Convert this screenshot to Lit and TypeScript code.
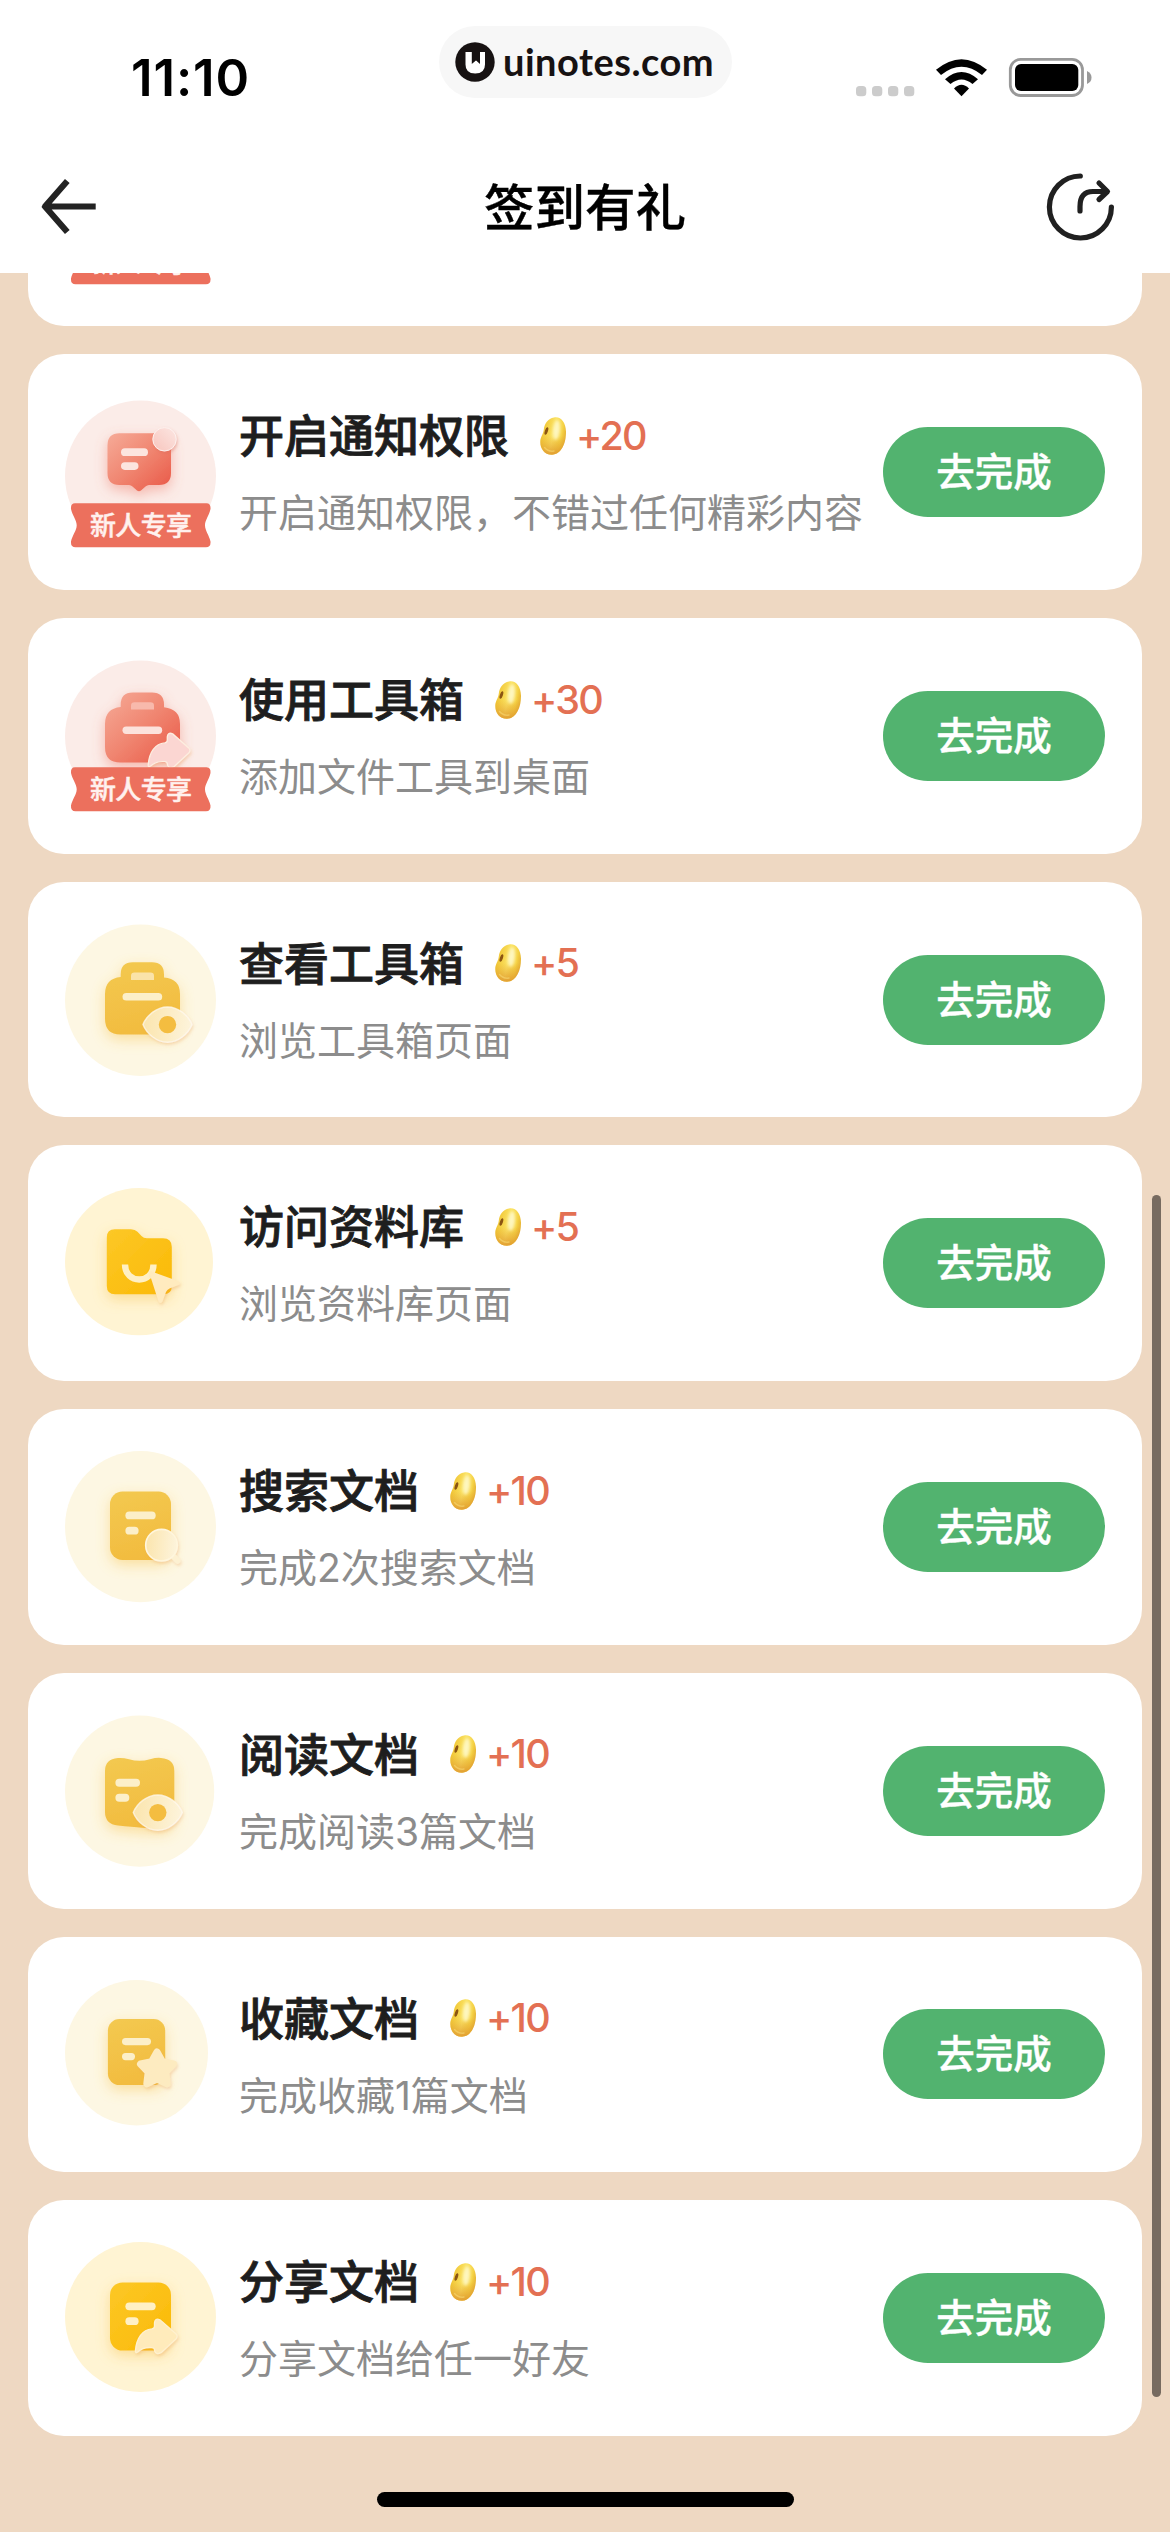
import { LitElement, html, svg, css } from "lit";
import type { SVGTemplateResult } from "lit";
import { customElement } from "lit/decorators.js";

interface Task {
  title: string;
  detail: string;
  reward: number;
  newcomer?: boolean;
  art: SVGTemplateResult;
}

/* Task artwork is drawn in card space: x from the screen edge, y from the card top. */

const bar = (x: number, y: number, w: number, h: number, fill: string) =>
  svg`<rect x=${x} y=${y} width=${w} height=${h} rx=${h / 2} fill=${fill} />`;

const disc = (cx: number, cy: number, rx: number, ry: number, fill: string) =>
  svg`<ellipse cx=${cx} cy=${cy} rx=${rx} ry=${ry} fill=${fill} />`;

const eye = (cx: number, cy: number) => svg`
  <g transform="translate(${cx} ${cy})">
    <path d="M-24.500 0C-21-9-11-17.600 0-17.600S21-9 24.500 0C21 9 11 17.600 0 17.600S-21 9-24.500 0Z"
      fill="url(#pale)" stroke="#fffaf0" stroke-opacity=".75" stroke-width="1.400" stroke-linejoin="round" filter="url(#soft)" />
    <circle r="8.700" fill="#f4bd40" />
  </g>`;

const arrow = (x: number, y: number, fill: string, edge: string) => svg`
  <g transform="translate(${x} ${y})">
    <path d="M.5 31.500C1.500 19 7.500 10.300 17 9.600Q19.600 9.300 19.600 7V3.500Q20-1.500 25 .6L41 14.600Q43.500 17.200 41 19.800L26.500 33.200Q21.500 36 19.800 32V31Q19.600 28.600 17 28.400Q8 27.600 2.800 32.800Q.4 34.500 .5 31.500Z"
      fill=${fill} stroke=${edge} stroke-width="1.300" filter="url(#soft)" />
  </g>`;

const ART = {
  notice: svg`
    <g clip-path="url(#above)">${disc(140.500, 122, 75.500, 75.500, "#fbece8")}</g>
    <path d="M119.500 79.300H159Q171 79.300 171 91.300V119Q171 131 159 131H149Q147 131 145.500 132.500L141 136.500Q139 138 137 136.500L132.500 132.500Q131 131 129 131H119.500Q107.500 131 107.500 119V91.300Q107.500 79.300 119.500 79.300Z"
      fill="url(#coral)" filter="url(#glowRed)" />
    ${bar(121, 94.300, 27, 7.800, "#fce5df")}
    ${bar(121, 108.300, 17.500, 7.600, "#fce5df")}
    <circle cx="164.500" cy="85.300" r="11.700" fill="url(#blush)" stroke="#fdf1ee" stroke-width="1" filter="url(#softRed)" />`,
  useBox: svg`
    <g clip-path="url(#above)">${disc(140.500, 118.200, 75.500, 75.600, "#fbece8")}</g>
    <path d="M120.700 89V86.600Q120.700 74.600 132.700 74.600H152Q164 74.600 164 86.600V89.300Q180 91 180 106V129Q180 144.600 164.500 144.600H120.500Q105 144.600 105 129V106Q105 90.500 120.700 89Z"
      fill="url(#coral)" filter="url(#glowRed)" />
    <path d="M131 91.600V87.500Q131 84.300 134.500 84.300H150.500Q154 84.300 154 87.500V91.600Z" fill="#f8b9ac" />
    ${bar(122.500, 108.600, 39.700, 7.400, "#fce2dc")}
    ${arrow(147.700, 115.300, "#fbd6d2", "#fdeee0")}`,
  viewBox: svg`
    ${disc(140.500, 118.200, 75.500, 75.700, "#fdf7e3")}
    <path d="M120.700 95V92.200Q120.700 80.200 132.700 80.200H152Q164 80.200 164 92.200V95.600Q180 97 180 112V136.500Q180 152.600 164.500 152.600H120.500Q105 152.600 105 136.500V112Q105 96.500 120.700 95Z"
      fill="url(#amber)" filter="url(#glow)" />
    <path d="M131 98V93.800Q131 90.600 134.500 90.600H150.500Q154 90.600 154 93.800V98Z" fill="#fae3a9" />
    ${bar(122.500, 110.900, 39.700, 7.700, "#fcefc9")}
    ${eye(167.500, 142.600)}`,
  library: svg`
    ${disc(139, 116.700, 74, 73.600, "#fff4d3")}
    <path d="M115 84.200H131Q135 84.200 137.500 86.800L141.500 91Q143.500 93.200 147 93.200H163Q171.800 93.200 171.800 102V141Q171.800 149.200 163.500 149.200H115Q106.800 149.200 106.800 141V92.400Q106.800 84.200 115 84.200Z"
      fill="url(#gold)" filter="url(#glow)" />
    <path d="M125 119.500C125 139.500 153.500 139.500 153.500 119.500" fill="none" stroke="#fff0c4" stroke-width="6.400" />
    <path d="M151.500 126.500L178.500 136.200Q182 138 178.500 140L169.500 143.500Q167 144.500 166 147L162.500 156.500Q160.500 159.500 158.500 156.500L149.500 128.500Q149 125.800 151.500 126.500Z"
      fill="#ffebbf" filter="url(#soft)" />`,
  search: svg`
    ${disc(140.500, 117.700, 75.500, 75.600, "#fdf7e3")}
    <rect x="110" y="82.500" width="61" height="68.500" rx="12.500" fill="url(#amber)" filter="url(#glow)" />
    ${bar(125.400, 102.500, 30.300, 7.800, "#fcefc9")}
    ${bar(125.400, 117.800, 13.200, 7.800, "#fcefc9")}
    <g filter="url(#soft)">
      <path d="M172 146L177.500 151.800" stroke="#fdf1d2" stroke-width="6" stroke-linecap="round" />
      <circle cx="161.500" cy="136.200" r="15.800" fill="url(#pale)" stroke="#fff6dd" stroke-width="1.600" />
    </g>`,
  read: svg`
    ${disc(139.600, 118.200, 74.600, 75.600, "#fdf7e3")}
    <path d="M118 85Q123 84.500 129 86.300Q139.500 89.300 150 86.300Q157 84.400 161 85Q174.300 86 174.300 98V141Q174.300 157 157 155.500Q148 155.600 118 152.600Q105 151 105 139V98Q105 86 118 85Z"
      fill="url(#amber)" filter="url(#glow)" />
    ${bar(115.400, 105.800, 24.600, 8, "#fcefc9")}
    ${bar(115.400, 120.800, 13.900, 8, "#fcefc9")}
    ${eye(157.800, 139.600)}`,
  collect: svg`
    ${disc(136.500, 115.700, 71.500, 72.700, "#fdf7e3")}
    <rect x="107.900" y="82.100" width="57.300" height="66" rx="11.500" fill="url(#amber)" filter="url(#glow)" />
    ${bar(122, 101, 29, 7.200, "#fcefc9")}
    ${bar(122, 116, 13, 7.200, "#fcefc9")}
    <path d="M157 115L162.500 124.800L173.500 127L165.800 135.200L167.200 146.800L157 142L146.800 146.800L148.200 135.200L140.500 127L151.500 124.800Z"
      fill="#fdebc0" stroke="#fdebc0" stroke-width="7" stroke-linejoin="round" filter="url(#soft)" />`,
  share: svg`
    ${disc(140.500, 117, 75.500, 75, "#fff4d3")}
    <rect x="110" y="82.400" width="61" height="68.200" rx="12.500" fill="url(#gold)" filter="url(#glow)" />
    ${bar(125.400, 102.400, 30.300, 7.800, "#fff0c4")}
    ${bar(125.400, 117.300, 13.200, 7.800, "#fff0c4")}
    ${arrow(134.900, 119.200, "#ffebbb", "#fff1cf")}`,
};

const TASKS: Task[] = [
  { title: "开启通知权限", detail: "开启通知权限，不错过任何精彩内容", reward: 20, newcomer: true, art: ART.notice },
  { title: "使用工具箱", detail: "添加文件工具到桌面", reward: 30, newcomer: true, art: ART.useBox },
  { title: "查看工具箱", detail: "浏览工具箱页面", reward: 5, art: ART.viewBox },
  { title: "访问资料库", detail: "浏览资料库页面", reward: 5, art: ART.library },
  { title: "搜索文档", detail: "完成2次搜索文档", reward: 10, art: ART.search },
  { title: "阅读文档", detail: "完成阅读3篇文档", reward: 10, art: ART.read },
  { title: "收藏文档", detail: "完成收藏1篇文档", reward: 10, art: ART.collect },
  { title: "分享文档", detail: "分享文档给任一好友", reward: 10, art: ART.share },
];

@customElement("app-root")
export class AppRoot extends LitElement {
  static styles = css`
    :host {
      display: block;
      width: 1170px;
      height: 2532px;
      overflow: hidden;
      font-family: "Inter", "Noto Sans CJK SC", sans-serif;
      color: #1e1e1e;
    }
    * { box-sizing: border-box; }
    svg { display: block; flex: none; }
    .screen {
      position: relative;
      display: flex;
      flex-direction: column;
      width: 1170px;
      height: 2532px;
      background: #eed8c2;
    }
    .top { height: 273px; flex: none; background: #fff; z-index: 1; }
    .status {
      display: grid;
      grid-template-columns: 439px 293px 438px;
      height: 140px;
      align-items: start;
    }
    .time {
      padding: 48px 0 0 131px;
      font-size: 51px;
      line-height: 60px;
      font-weight: 600;
      letter-spacing: 0.9px;
      color: #000;
    }
    .brand {
      display: flex;
      align-items: center;
      gap: 8px;
      height: 72px;
      margin-top: 26px;
      padding-left: 16px;
      border-radius: 36px;
      background: #f7f7f7;
      font: 700 38px/72px "Lato", sans-serif;
      letter-spacing: 0.5px;
      color: #171212;
    }
    .brand span { margin-top: -2px; }
    .signals { display: flex; padding: 56px 0 0 124px; }
    .nav {
      display: grid;
      grid-template-columns: 200px 1fr 200px;
      align-items: center;
      height: 133px;
    }
    .nav h1 {
      margin: 2px 0 0;
      text-align: center;
      font-size: 50.5px;
      line-height: 60px;
      font-weight: 500;
      -webkit-text-stroke: 0.4px #000;
      color: #000;
    }
    .back { margin-left: 40px; }
    .forward { justify-self: end; margin-right: 52px; }
    .list {
      display: flex;
      flex-direction: column;
      gap: 28px;
      margin: -182.300px 28px 0;
    }
    .card {
      display: flex;
      height: 235.700px;
      padding: 0 37px 0 32px;
      border-radius: 36px;
      background: #fff;
    }
    .art { width: 160px; height: 235.700px; }
    .ribbon {
      font-size: 26px;
      font-weight: 500;
      letter-spacing: -0.6px;
      fill: #fff1ee;
      stroke: #fff1ee;
      stroke-width: 0.5px;
    }
    .copy {
      flex: 1;
      display: flex;
      flex-direction: column;
      min-width: 0;
      padding: 54px 0 0 19px;
      white-space: nowrap;
    }
    .head { display: flex; align-items: center; height: 54px; }
    .head h2 {
      margin: 4px 0 0;
      font-size: 45px;
      line-height: 54px;
      font-weight: 500;
      -webkit-text-stroke: 0.9px #1e1e1e;
    }
    .bean { margin: 1px 8px 0 30px; }
    .reward {
      margin-top: 1px;
      font-size: 39.500px;
      line-height: 54px;
      font-weight: 500;
      letter-spacing: -1.8px;
      color: #e37053;
    }
    .detail {
      margin: 28px 0 0;
      font-size: 39px;
      line-height: 46px;
      font-weight: 400;
      color: #8c8c8c;
    }
    .go {
      align-self: center;
      flex: none;
      width: 222px;
      height: 90px;
      padding: 0 0 5px;
      border: 0;
      border-radius: 45px;
      background: #52b36f;
      color: #fff;
      font: 500 38.500px/85px "Noto Sans CJK SC", sans-serif;
      -webkit-text-stroke: 0.4px #fff;
    }
    .thumb {
      position: absolute;
      left: 1152px;
      top: 1195px;
      width: 9px;
      height: 1202px;
      border-radius: 5px;
      background: #776b60;
    }
    .home {
      position: absolute;
      left: 377px;
      top: 2492px;
      width: 417px;
      height: 15px;
      border-radius: 8px;
      background: #000;
    }
  `;

  private defs() {
    return html`<svg width="0" height="0" aria-hidden="true">
      <defs>
        <linearGradient id="coral" x1="0" y1="0" x2="1" y2="1">
          <stop offset="0" stop-color="#f6ab98" /><stop offset=".5" stop-color="#f08570" /><stop offset="1" stop-color="#e95746" />
        </linearGradient>
        <linearGradient id="amber" x1=".3" y1="0" x2=".6" y2="1">
          <stop offset="0" stop-color="#f3c84f" /><stop offset="1" stop-color="#f2bb3e" />
        </linearGradient>
        <linearGradient id="gold" x1="0" y1="0" x2="1" y2="1">
          <stop offset="0" stop-color="#fcc827" /><stop offset="1" stop-color="#fbb905" />
        </linearGradient>
        <linearGradient id="pale" x1="0" y1=".5" x2="1" y2=".6">
          <stop offset="0" stop-color="#fbe5ae" /><stop offset="1" stop-color="#fdf4dc" />
        </linearGradient>
        <linearGradient id="blush" x1="0" y1="1" x2="1" y2="0">
          <stop offset="0" stop-color="#f8c5bd" /><stop offset="1" stop-color="#fce6e2" />
        </linearGradient>
        <linearGradient id="bean" x1="0" y1=".3" x2="1" y2=".6">
          <stop offset="0" stop-color="#eebf2a" /><stop offset=".5" stop-color="#fbe364" />
          <stop offset=".8" stop-color="#f5d244" /><stop offset="1" stop-color="#e3ac34" />
        </linearGradient>
        <linearGradient id="beanFoot" x1="0" y1="0" x2="0" y2="1">
          <stop offset=".5" stop-color="#e09a2c" stop-opacity="0" /><stop offset="1" stop-color="#dc8f28" stop-opacity=".8" />
        </linearGradient>
        <filter id="glow" x="-40%" y="-40%" width="180%" height="190%">
          <feDropShadow dx="0" dy="5" stdDeviation="7" flood-color="#f6bd3c" flood-opacity=".42" />
        </filter>
        <filter id="glowRed" x="-40%" y="-40%" width="180%" height="190%">
          <feDropShadow dx="0" dy="5" stdDeviation="6.500" flood-color="#ee7460" flood-opacity=".45" />
        </filter>
        <filter id="soft" x="-40%" y="-40%" width="190%" height="190%">
          <feDropShadow dx="1" dy="2" stdDeviation="1.500" flood-color="#e79a50" flood-opacity=".3" />
        </filter>
        <filter id="softRed" x="-40%" y="-40%" width="190%" height="190%">
          <feDropShadow dx="1" dy="2" stdDeviation="1.500" flood-color="#dd6a58" flood-opacity=".4" />
        </filter>
        <filter id="haze" x="-60%" y="-60%" width="220%" height="220%"><feGaussianBlur stdDeviation="1.600" /></filter>
        <clipPath id="above"><rect x="60" y="0" width="160" height="152" /></clipPath>
      </defs>
    </svg>`;
  }

  private ribbon() {
    return svg`
      <path d="M75 149.300H206.500Q211 149.500 210.500 155C209 162 205 166 205 171.300S209 181 210.500 187.500Q211 193.300 206 193.300H75.500Q70.500 193.300 71 187.500C72.500 181 76.700 176.500 76.700 171.300S72.500 162 71 155Q70.500 149.300 75 149.300Z"
        fill="#ec705d" />
      <text class="ribbon" x="140.700" y="181.300" text-anchor="middle">新人专享</text>`;
  }

  private art(content: unknown, newcomer = false) {
    return html`<svg class="art" viewBox="60 0 160 235.7">
      ${content}${newcomer ? this.ribbon() : ""}
    </svg>`;
  }

  private bean() {
    const shape =
      "M15 1.500C21.500 0 26.800 6 27 15.500C27.200 27 22.500 38.300 13 38.800C5.500 39 1.200 32.500 1.300 26C1.400 20.500 4.300 18.500 4.800 13.500C5.300 8 9 2.500 15 1.500Z";
    return html`<svg class="bean" width="29" height="40" viewBox="0 0 29 40">
      <path d=${shape} fill="url(#bean)" />
      <path d=${shape} fill="url(#beanFoot)" />
      <ellipse cx="17.500" cy="14" rx="3.600" ry="10" transform="rotate(6 17.500 14)" fill="#fffbd0" opacity=".85" filter="url(#haze)" />
      <ellipse cx="7.400" cy="15" rx="1.500" ry="4" transform="rotate(18 7.400 15)" fill="#8b5512" />
      <path d="M5.500 31.500Q9.500 36 15 35" fill="none" stroke="#fbe07c" stroke-width="1.500" stroke-linecap="round" opacity=".5" />
    </svg>`;
  }

  private card(task: Task) {
    return html`<article class="card">
      ${this.art(task.art, task.newcomer)}
      <div class="copy">
        <div class="head">
          <h2>${task.title}</h2>
          ${this.bean()}
          <span class="reward">+${task.reward}</span>
        </div>
        <p class="detail">${task.detail}</p>
      </div>
      <button class="go">去完成</button>
    </article>`;
  }

  render() {
    return html`<div class="screen">
      <header class="top">
        <div class="status">
          <div class="time">11:10</div>
          <div class="brand">
            <svg width="40" height="40" viewBox="0 0 40 40">
              <circle cx="20" cy="20" r="19.700" fill="#171212" />
              <path d="M10.500 10H16.800V22L21 18.200L25 22V10H30V22.500Q30 31.500 20.200 31.500T10.500 22.500Z" fill="#fff" />
              <path d="M17.400 10H24.600V21L21 18L17.400 21Z" fill="#171212" />
            </svg>
            <span>uinotes.com</span>
          </div>
          <div class="signals">
            <svg width="240" height="44" viewBox="856 56 240 44">
              <g fill="#ccc">
                <rect x="856" y="86" width="10.300" height="10.300" rx="3.600" />
                <rect x="872" y="86" width="10.300" height="10.300" rx="3.600" />
                <rect x="888" y="86" width="10.300" height="10.300" rx="3.600" />
                <rect x="904" y="86" width="10.300" height="10.300" rx="3.600" />
              </g>
              <path d="M936 69.800Q961.500 48.500 987 69.800L982 75Q961.500 58.500 941 75Z" fill="#000" />
              <path d="M945 79.300Q961.500 64.800 978 79.300L972.500 84Q961.500 75 950.500 84Z" fill="#000" />
              <path d="M954 88.500Q961.500 81 969 88.500L961.500 96.300Z" fill="#000" />
              <rect x="1010.300" y="59.300" width="72.200" height="36.200" rx="10.500" fill="none" stroke="#999" stroke-width="2.800" />
              <rect x="1015" y="64" width="63.300" height="27" rx="6" fill="#000" />
              <path d="M1087 71Q1091.500 73 1091.500 77.500T1087 84Z" fill="#999" />
            </svg>
          </div>
        </div>
        <nav class="nav">
          <svg class="back" width="60" height="60" viewBox="40 177 60 60" fill="none" stroke="#232323" stroke-width="6.200">
            <path d="M95.700 206.500H46M67.300 181L45 206.500L67.300 232" stroke-linejoin="round" />
          </svg>
          <h1>签到有礼</h1>
          <svg class="forward" width="74" height="74" viewBox="1044 170.500 74 74" fill="none" stroke="#202020"
            stroke-width="5.200" stroke-linecap="round" stroke-linejoin="round">
            <path d="M1080.300 176.500A31 31 0 1 0 1111.400 207.500" />
            <path d="M1080 211.500V207Q1080 192 1093 192H1106M1099 183.500L1107.500 192L1099 200" />
          </svg>
        </nav>
      </header>
      ${this.defs()}
      <main class="list">
        <article class="card">${this.art("", true)}</article>
        ${TASKS.map((task) => this.card(task))}
      </main>
      <div class="thumb"></div>
      <div class="home"></div>
    </div>`;
  }
}
